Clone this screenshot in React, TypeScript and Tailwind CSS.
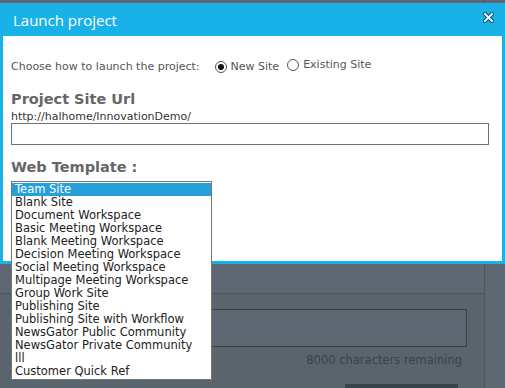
import { useState } from "react";

const TEMPLATES = [
  "Team Site",
  "Blank Site",
  "Document Workspace",
  "Basic Meeting Workspace",
  "Blank Meeting Workspace",
  "Decision Meeting Workspace",
  "Social Meeting Workspace",
  "Multipage Meeting Workspace",
  "Group Work Site",
  "Publishing Site",
  "Publishing Site with Workflow",
  "NewsGator Public Community",
  "NewsGator Private Community",
  "lll",
  "Customer Quick Ref",
];

function Radio({ checked, label }: { checked: boolean; label: string }) {
  return (
    <span className="inline-flex items-center gap-[4px]">
      <span className="flex h-[12px] w-[12px] items-center justify-center rounded-full border border-[#555] bg-white">
        {checked && <span className="h-[6px] w-[6px] rounded-full bg-[#111]" />}
      </span>
      <span>{label}</span>
    </span>
  );
}

export default function App() {
  const [mode] = useState("new");

  return (
    <div className="relative h-[388px] w-[505px] overflow-hidden bg-[#5e6772] font-['DejaVu_Sans',Verdana,sans-serif]">
      {/* page behind the dialog */}
      <div className="flex h-full">
        <div className="flex w-[485px] flex-col border-r border-[#4d565f]">
          <div className="h-[299px] border-b border-[#4d565f]" />
          <div className="flex flex-1 flex-col bg-[#5a646d] pl-[11px] pr-[17px] pt-[15px]">
            <div className="h-[38px] border border-[#38414a] bg-[#5e6772]" />
            <div className="mr-[5px] mt-[6px] text-right text-[11.5px] leading-[14px] text-[#3a424b]">8000 characters remaining</div>
            <div className="ml-auto mr-[9px] mt-[17px] h-[4px] w-[113px] shrink-0 bg-[#3a424b]" />
          </div>
        </div>
      </div>

      {/* dialog */}
      <div className="absolute left-0 top-[3px] flex h-[261px] w-[505px] flex-col bg-[#19b2e8] pb-[3px] pl-[3px] pr-[3px]">
        <div className="flex h-[33px] items-center justify-between pl-[10px] pr-[8px]">
          <span className="mt-[1px] font-['Open_Sans',sans-serif] text-[15px] text-white">Launch project</span>
          <svg width="11" height="11" viewBox="0 0 11 11" className="mb-[4px]">
            <path d="M2 2 L9 9 M9 2 L2 9" stroke="#0b4c66" strokeWidth="4" strokeLinecap="square" />
            <path d="M2 2 L9 9 M9 2 L2 9" stroke="#eaf6fb" strokeWidth="2" strokeLinecap="square" />
          </svg>
        </div>
        <div className="flex-1 bg-white px-[8px] pt-[21px] text-[11px] text-[#555]">
          <div className="flex items-center">
            <span>Choose how to launch the project:</span>
            <span className="ml-[15px]">
              <Radio checked={mode === "new"} label="New Site" />
            </span>
            <span className="ml-[8px]">
              <Radio checked={mode === "existing"} label="Existing Site" />
            </span>
          </div>
          <h2 className="mt-[13px] text-[14.5px] font-bold leading-[18px] text-[#666]">Project Site Url</h2>
          <div className="mt-[2px] leading-[13px] text-[#333]">http://halhome/InnovationDemo/</div>
          <div className="mr-[5px] h-[22px] border border-[#707070]" />
          <h2 className="mt-[13px] text-[14.5px] font-bold leading-[18px] text-[#666]">Web Template :</h2>
        </div>
      </div>

      {/* open template list */}
      <ul className="absolute left-[11px] top-[181px] w-[201px] border border-[#777] bg-white py-[1px] text-[11.5px] text-[#222]">
        {TEMPLATES.map((t, i) => (
          <li
            key={t}
            className={i === 0 ? "h-[13px] bg-[#25a0db] pl-[3px] leading-[13px] text-white" : "h-[13px] pl-[3px] leading-[13px]"}
          >
            {t}
          </li>
        ))}
      </ul>
    </div>
  );
}
